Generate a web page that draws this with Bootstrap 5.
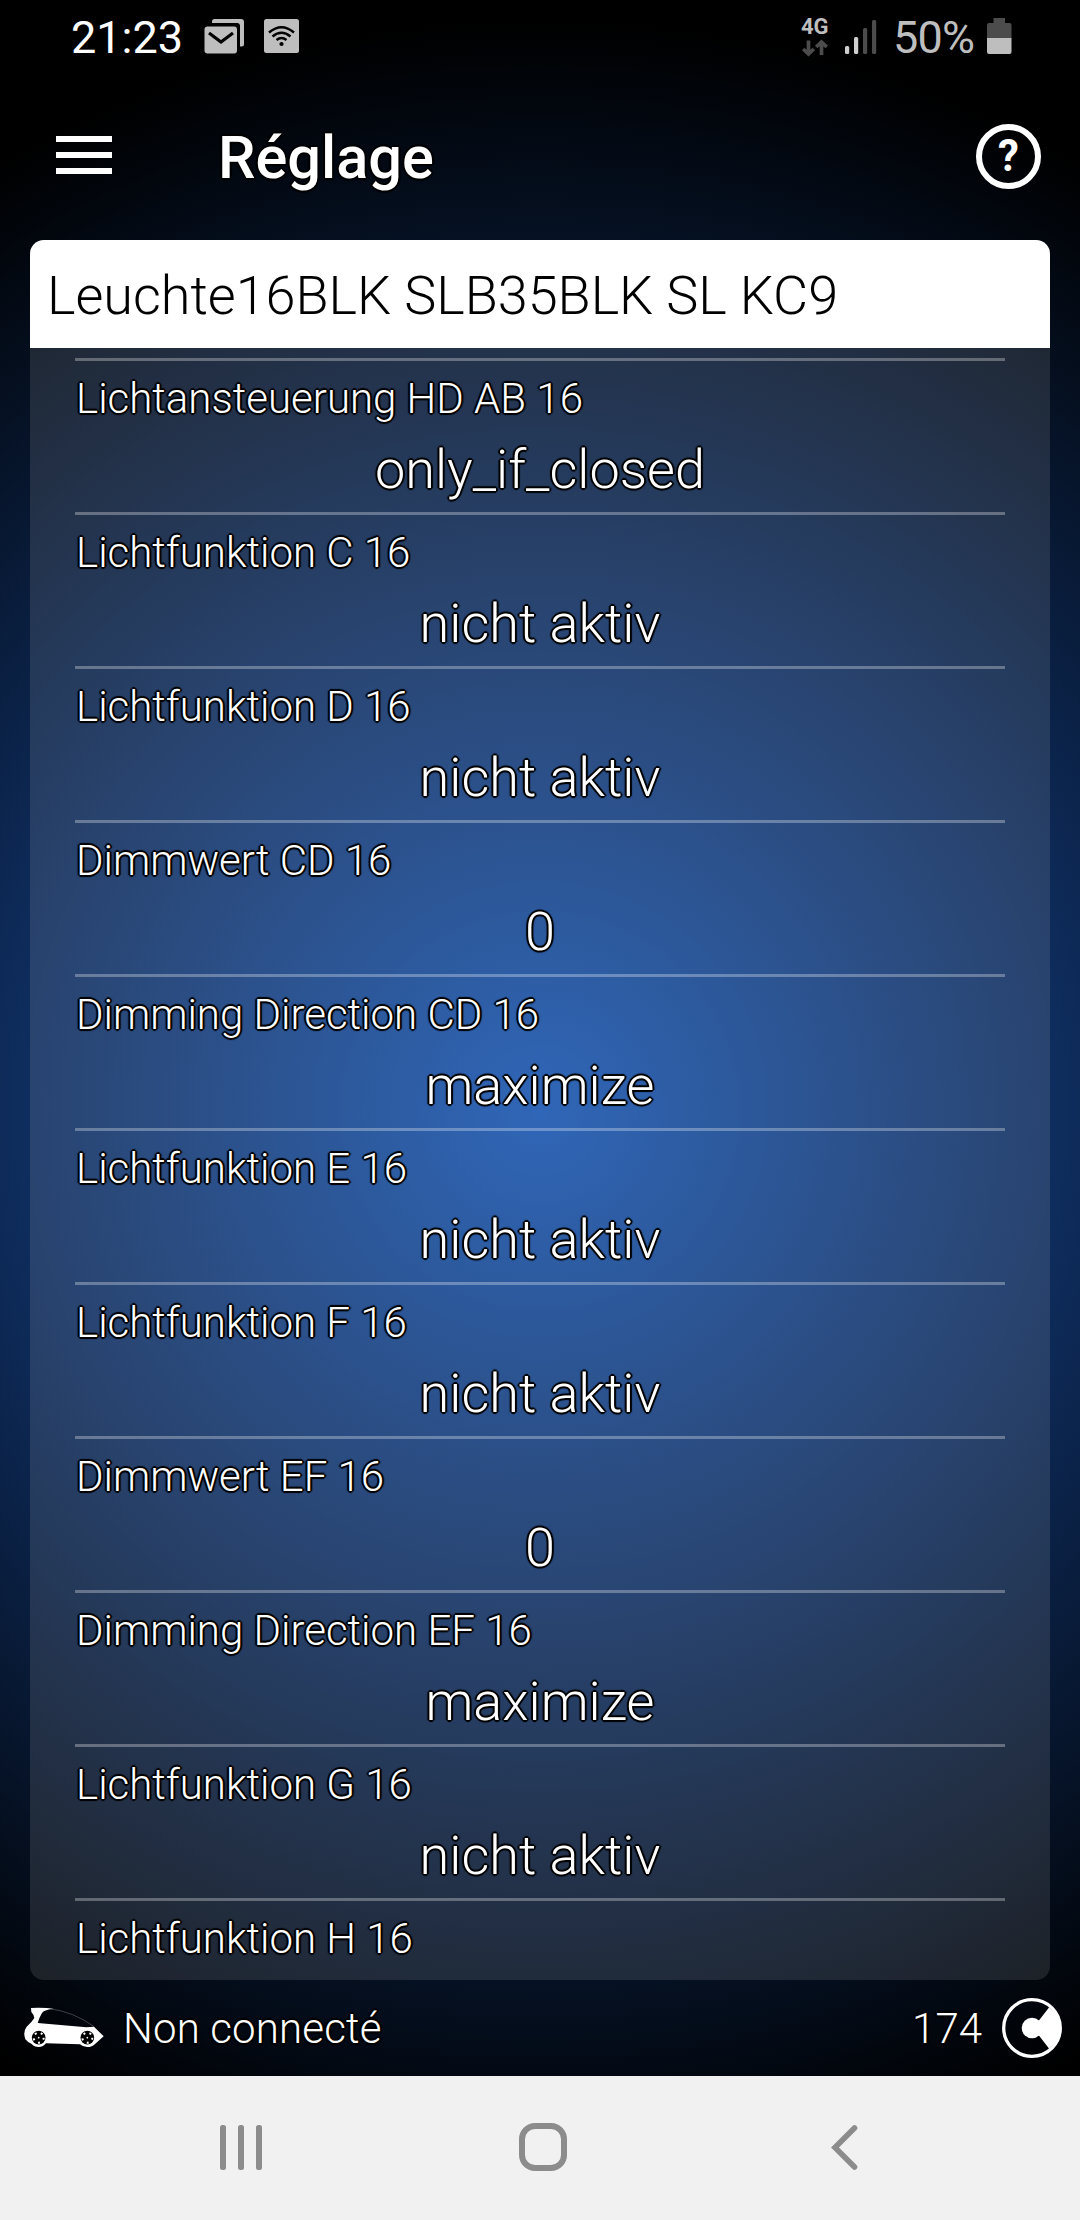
<!DOCTYPE html>
<html lang="fr">
<head>
<meta charset="utf-8">
<meta name="viewport" content="width=device-width, initial-scale=1">
<title>Réglage</title>
<link href="https://cdn.jsdelivr.net/npm/bootstrap@5.3.0/dist/css/bootstrap.min.css" rel="stylesheet">
<style>
body{width:1080px;height:2220px;overflow:hidden;background:#000;font-family:Roboto,"Noto Sans",sans-serif;color:#fff}
.screen{height:2076px;background:radial-gradient(circle at 540px 1110px,#1754b0 0,#0e2c5c 525px,#000 1090px)}
.statusbar{height:76px;padding:0 68px 0 71px}
.clock{font-size:45px;line-height:76px;width:133px}
.pct{font-size:45px;line-height:76px;color:#bebebe;width:94px;letter-spacing:-.8px}
.netbox{width:43px;height:76px;padding-top:16px}
.g4{font-size:22px;font-weight:700;line-height:22px;color:#bebebe}
.appbar{height:164px;padding:0 39px 0 56px}
.menuico{margin-bottom:6px}
.apptitle{font-size:59.5px;font-weight:500;line-height:80px;margin-left:106px}
.helpbtn{width:65px;height:65px;border:6.5px solid #fff;font-size:45px;font-weight:700;line-height:52px;margin-bottom:3px}
.helpbtn span{display:block;transform:scaleX(.93)}
.outl{text-shadow:1px 1px 1px #000,-1px -1px 1px #000,1px -1px 1px #000,-1px 1px 1px #000,2px 0 1px #000,-2px 0 1px #000,0 2px 1px #000,0 -2px 1px #000}
.panel{margin:0 30px;height:1740px;border-radius:14px;background:rgba(255,255,255,.11)}
.panelhead{height:108px;background:#fff;color:#000;font-size:54px;font-weight:300;line-height:112px;padding-left:17px;letter-spacing:-.03px}
.rows{padding:10px 45px 0}
.entry{height:154px;border-top:3px solid rgba(255,255,255,.3)}
.lbl{font-size:42px;font-weight:300;line-height:50px;padding:13px 0 0 1px;height:77px;white-space:nowrap}
.val{font-size:54px;font-weight:300;line-height:64px}
.foot{height:96px;padding:0 18px;font-size:42px;font-weight:300}
.carico{margin-bottom:-4px}
.conn{letter-spacing:.15px}
.sysnav{height:144px;background:#f1f1f1;padding:0 222px 2px 220px}
.homeico{margin-left:257px}
svg{display:block;flex:none}
</style>
</head>
<body>
<div class="screen d-flex flex-column">
  <header class="statusbar d-flex align-items-center">
    <span class="clock">21:23</span>
    <svg width="96" height="76" viewBox="204 0 96 76">
      <path d="M212 23v-1.500q0-2.500 2.500-2.500H241q3 0 3 3v22q0 2.500-2.500 2.500H240V26q0-3-3-3z" fill="#bebebe"/>
      <rect x="204.500" y="26.500" width="32.500" height="27" rx="3" fill="#bebebe"/>
      <path d="M209 33l12 9 12-9" fill="none" stroke="#000" stroke-width="3.200"/>
      <rect x="264" y="19" width="35" height="34" rx="2.500" fill="#bebebe"/>
      <g fill="none" stroke="#000" stroke-width="2.500"><path d="M269 32.500q12.500-10.500 25 0M272.500 36.500q9-7.500 18 0M276.500 40q5-4 10 0"/></g>
      <circle cx="281.500" cy="44" r="2.100"/>
    </svg>
    <div class="ms-auto d-flex">
      <div class="netbox">
        <div class="g4">4G</div>
        <svg width="28" height="19" viewBox="0 0 28 19" fill="none" stroke="#4c4c4c" stroke-width="3.700"><path d="M7.500 2.500v13M2.200 11l5.300 5 5.300-5M20.500 17V4M15.200 9l5.300-5 5.300 5"/></svg>
      </div>
      <svg width="49" height="76" viewBox="843.500 0 49 76">
        <g fill="#cfcfcf"><rect x="844.500" y="46" width="4.200" height="8" rx="1.500"/><rect x="853.500" y="37" width="4.200" height="17" rx="1.500"/></g>
        <g fill="#4c4c4c"><rect x="862.500" y="28" width="4.200" height="26" rx="1.500"/><rect x="871.500" y="20" width="4.200" height="34" rx="1.500"/></g>
      </svg>
      <span class="pct">50%</span>
      <svg width="25" height="76" viewBox="987 0 25 76"><path d="M993.500 23v-5h11.500v5h4.500q2 0 2 2v13h-24.500V25q0-2 2-2z" fill="#4c4c4c"/><path d="M987 38h24.500v14q0 2-2 2H989q-2 0-2-2z" fill="#bebebe"/></svg>
    </div>
  </header>
  <nav class="appbar d-flex align-items-center">
    <svg class="menuico" width="56" height="38" viewBox="0 0 56 38" fill="#fff"><path d="M0 0h56v6H0zM0 16h56v6H0zM0 32h56v6H0z"/></svg>
    <span class="apptitle outl">Réglage</span>
    <span class="helpbtn rounded-circle ms-auto text-center"><span>?</span></span>
  </nav>
  <main class="panel overflow-hidden">
    <div class="panelhead">Leuchte16BLK SLB35BLK SL KC9</div>
    <div class="rows">
      <div class="entry"><div class="lbl outl">Lichtansteuerung HD AB 16</div><div class="val outl text-center">only_if_closed</div></div>
      <div class="entry"><div class="lbl outl">Lichtfunktion C 16</div><div class="val outl text-center">nicht aktiv</div></div>
      <div class="entry"><div class="lbl outl">Lichtfunktion D 16</div><div class="val outl text-center">nicht aktiv</div></div>
      <div class="entry"><div class="lbl outl">Dimmwert CD 16</div><div class="val outl text-center">0</div></div>
      <div class="entry"><div class="lbl outl">Dimming Direction CD 16</div><div class="val outl text-center">maximize</div></div>
      <div class="entry"><div class="lbl outl">Lichtfunktion E 16</div><div class="val outl text-center">nicht aktiv</div></div>
      <div class="entry"><div class="lbl outl">Lichtfunktion F 16</div><div class="val outl text-center">nicht aktiv</div></div>
      <div class="entry"><div class="lbl outl">Dimmwert EF 16</div><div class="val outl text-center">0</div></div>
      <div class="entry"><div class="lbl outl">Dimming Direction EF 16</div><div class="val outl text-center">maximize</div></div>
      <div class="entry"><div class="lbl outl">Lichtfunktion G 16</div><div class="val outl text-center">nicht aktiv</div></div>
      <div class="entry"><div class="lbl outl">Lichtfunktion H 16</div></div>
    </div>
  </main>
  <footer class="foot d-flex align-items-center">
    <svg class="carico" width="105" height="60" viewBox="0 0 315 180">
      <path d="M39 24Q80 22 108 27Q80 28 72 39Q64 52 59 69L205 82L228 80L257 109L232 131Q222 141 208 141Q194 141 186 133L84 130Q76 141 62 141Q48 141 41 132Q30 128 22 118Q14 96 26 80Q42 66 49 54Q49 46 40 36z" fill="#fff"/>
      <path d="M90 25Q170 36 228 80" fill="none" stroke="#fff" stroke-opacity=".35" stroke-width="2"/>
      <g fill="#000"><circle cx="62" cy="113" r="20.500"/><circle cx="208" cy="113" r="20.500"/></g>
      <g fill="none" stroke="#fff" stroke-width="6" stroke-dasharray="6 12.850"><circle cx="62" cy="113" r="15"/><circle cx="208" cy="113" r="15"/></g>
      <g fill="#fff"><circle cx="62" cy="113" r="2.500"/><circle cx="208" cy="113" r="2.500"/></g>
    </svg>
    <span class="outl conn">Non connecté</span>
    <span class="outl ms-auto me-3 pe-1">174</span>
    <svg width="60" height="60" viewBox="-30 -30 60 60"><circle r="28.300" fill="none" stroke="#fff" stroke-width="3.300"/><circle r="10.300" fill="#fff"/><path d="M0 0L7.300-8L17-20.500Q29-12 29 0T17 20.500L7.300 8z" fill="#fff"/></svg>
  </footer>
</div>
<nav class="sysnav d-flex align-items-center">
  <svg width="42" height="45" viewBox="0 0 42 45" fill="#8c8c8c"><rect width="6" height="45" rx="2.500"/><rect x="18" width="6" height="45" rx="2.500"/><rect x="36" width="6" height="45" rx="2.500"/></svg>
  <svg class="homeico" width="48" height="48" viewBox="0 0 48 48" fill="none" stroke="#8c8c8c" stroke-width="6"><rect x="3" y="3" width="42" height="42" rx="13"/></svg>
  <svg class="ms-auto" width="27" height="45" viewBox="0 0 27 45" fill="none" stroke="#8c8c8c" stroke-width="5.600" stroke-linecap="round"><path d="M23.500 3L4 22.500L23.500 42"/></svg>
</nav>
<script src="https://cdn.jsdelivr.net/npm/bootstrap@5.3.0/dist/js/bootstrap.bundle.min.js"></script>
</body>
</html>
